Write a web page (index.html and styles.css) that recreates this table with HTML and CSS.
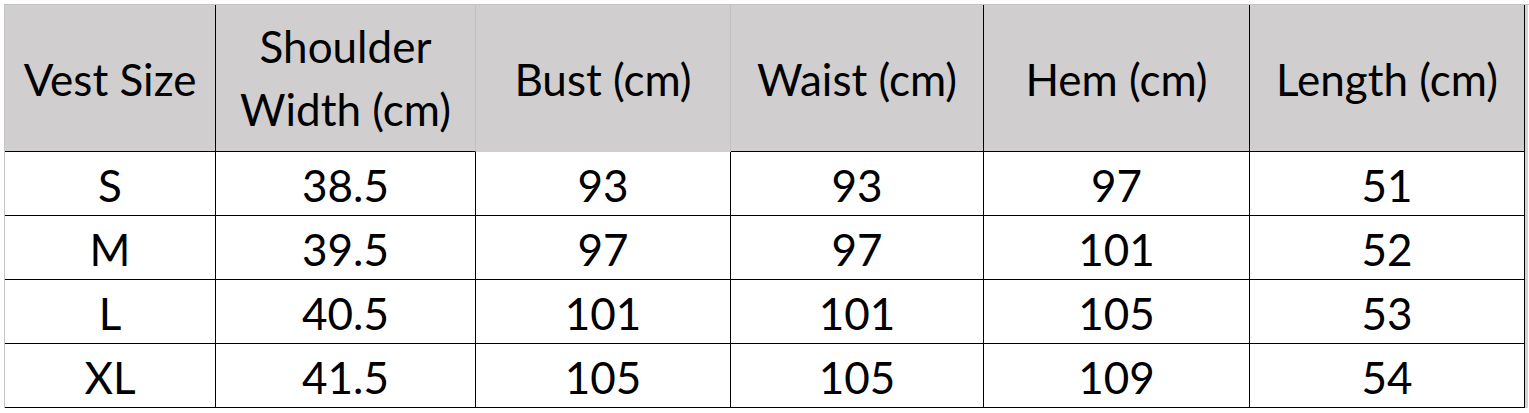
FILE: index.html
```html
<!DOCTYPE html>
<html lang="en">
<head>
<meta charset="utf-8">
<title>Vest Size Chart</title>
<link rel="stylesheet" href="styles.css">
</head>
<body>
<div class="sheet">
  <div class="grid">
    <div class="cell head">Vest Size</div>
    <div class="cell head soft-right two-line">Shoulder<br>Width (cm)</div>
    <div class="cell head bust">Bust (cm)</div>
    <div class="cell head">Waist (cm)</div>
    <div class="cell head">Hem (cm)</div>
    <div class="cell head">Length (cm)</div>

    <div class="cell">S</div><div class="cell">38.5</div><div class="cell">93</div><div class="cell">93</div><div class="cell">97</div><div class="cell">51</div>
    <div class="cell">M</div><div class="cell">39.5</div><div class="cell">97</div><div class="cell">97</div><div class="cell">101</div><div class="cell">52</div>
    <div class="cell">L</div><div class="cell">40.5</div><div class="cell">101</div><div class="cell">101</div><div class="cell">105</div><div class="cell">53</div>
    <div class="cell">XL</div><div class="cell">41.5</div><div class="cell">105</div><div class="cell">105</div><div class="cell">109</div><div class="cell">54</div>
  </div>
</div>
</body>
</html>
```
FILE: styles.css
```css
html, body {
  margin: 0;
  padding: 0;
  background: #ffffff;
}

body {
  font-family: Lato, "Open Sans", "Liberation Sans", sans-serif;
  color: #000;
  overflow: hidden;
}

.sheet {
  margin: 4px 0 0 4px;
  border-top: 1px solid #c4c4c4;
  border-left: 1px solid #c4c4c4;
  display: flex;
}

.grid {
  display: grid;
  grid-template-columns: 211px 260px 255px 253px 266px 275px;
  grid-template-rows: 147px 64px 64px 64px 64px;
  border-right: 3px solid #d4d4d4;
}

.cell {
  box-sizing: border-box;
  border-right: 1px solid #000;
  border-bottom: 1px solid #000;
  display: flex;
  align-items: center;
  justify-content: center;
  text-align: center;
  font-size: 44px;
  line-height: 60px;
  padding-top: 2px;
}

.head {
  background: #d0cece;
  padding-top: 2px;
}

.two-line {
  line-height: 63px;
  padding-top: 0;
}

.soft-right {
  border-right-color: #c2c0c0;
}

.bust {
  border-bottom-color: #d0cece;
  border-right-color: #c2c0c0;
}
```
